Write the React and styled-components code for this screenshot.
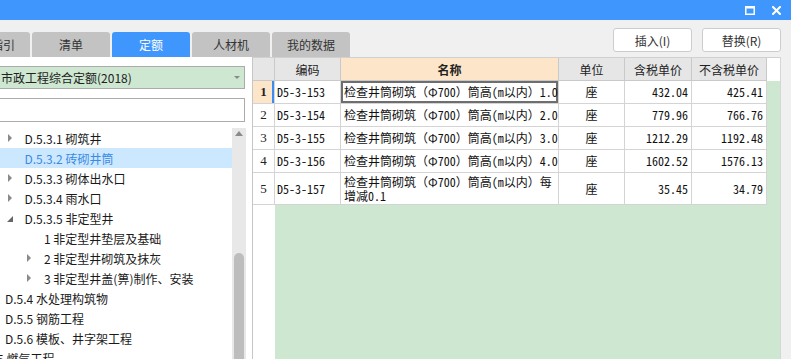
import React from 'react';
import styled, { createGlobalStyle } from 'styled-components';

const GlobalStyle = createGlobalStyle`
  html, body { margin: 0; padding: 0; }
  body {
    background: #f0f0f0;
    font-family: "Noto Sans CJK SC", "Noto Sans", sans-serif;
    overflow: hidden;
  }
  * { box-sizing: border-box; }
`;

const MONO = `"Noto Sans Mono CJK SC", "Noto Sans CJK SC", "Liberation Mono", monospace`;

const Window = styled.div`
  width: 791px;
  height: 359px;
  display: flex;
  flex-direction: column;
  background: #f0f0f0;
  overflow: hidden;
`;

const TitleBar = styled.div`
  height: 20px;
  flex-shrink: 0;
  background: #3f97fd;
  display: flex;
  justify-content: flex-end;
  align-items: center;
  gap: 17px;
  padding-right: 10px;
`;

const Toolbar = styled.div`
  height: 37px;
  flex-shrink: 0;
  display: flex;
`;

const Tabs = styled.div`
  display: flex;
  gap: 2px;
  align-self: flex-end;
  margin-left: -48px;
`;

const Tab = styled.div`
  width: 78px;
  height: 25px;
  flex-shrink: 0;
  border-radius: 3px 3px 0 0;
  background: ${p => (p.$active ? '#3f97fd' : '#c3c3c3')};
  color: ${p => (p.$active ? '#ffffff' : '#333333')};
  font-size: 12px;
  display: flex;
  align-items: center;
  justify-content: center;
`;

const Actions = styled.div`
  margin-left: auto;
  margin-top: 8px;
  margin-right: 10px;
  display: flex;
  gap: 10px;
`;

const ActionButton = styled.button`
  width: 79px;
  height: 24px;
  padding: 0;
  background: #ffffff;
  border: 1px solid #cdcdcd;
  border-radius: 3px;
  font-family: "Noto Sans CJK SC", sans-serif;
  font-size: 12px;
  color: #333333;
`;

const Main = styled.div`
  flex: 1;
  min-height: 0;
  display: flex;
`;

const LeftPanel = styled.div`
  width: 252px;
  flex-shrink: 0;
  background: #ffffff;
  display: flex;
  flex-direction: column;
  padding-top: 9px;
  overflow: hidden;
`;

const Select = styled.div`
  width: 245px;
  height: 23px;
  flex-shrink: 0;
  background: #cde7d1;
  border: 1px solid #ababab;
  border-left: none;
  display: flex;
  align-items: center;
  padding-left: 1px;
  font-size: 12px;
  color: #222222;
`;

const SelectArrow = styled.span`
  margin-left: auto;
  margin-right: 4px;
  width: 0;
  height: 0;
  border-left: 3px solid transparent;
  border-right: 3px solid transparent;
  border-top: 3px solid #8a8a8a;
`;

const Search = styled.div`
  width: 245px;
  height: 24px;
  flex-shrink: 0;
  margin-top: 9px;
  background: #ffffff;
  border: 1px solid #ababab;
  border-left: none;
`;

const TreeWrap = styled.div`
  flex: 1;
  min-height: 0;
  margin-top: 6px;
  display: flex;
`;

const TreeList = styled.div`
  width: 232px;
  flex-shrink: 0;
  overflow: hidden;
`;

const TreeRow = styled.div`
  height: 20px;
  display: flex;
  align-items: center;
  background: ${p => (p.$selected ? '#cce8ff' : 'transparent')};
  color: ${p => (p.$selected ? '#3a8ae6' : '#1a1a1a')};
  font-size: 12px;
  white-space: nowrap;
`;

const TreeInner = styled.div`
  display: flex;
  align-items: center;
  margin-left: ${p => 5 + p.$level * 19.5 - 18}px;
`;

const CaretBox = styled.span`
  width: 18px;
  flex-shrink: 0;
  display: flex;
  align-items: center;
`;

const CaretClosed = styled.span`
  width: 0;
  height: 0;
  margin-left: 1px;
  border-top: 4px solid transparent;
  border-bottom: 4px solid transparent;
  border-left: 4px solid #8a8a8a;
`;

const CaretOpen = styled.span`
  width: 0;
  height: 0;
  margin-top: 2px;
  border-left: 6px solid transparent;
  border-bottom: 6px solid #666666;
`;

const ScrollTrack = styled.div`
  width: 14px;
  flex-shrink: 0;
  background: #e8e8e8;
  display: flex;
  flex-direction: column;
  align-items: center;
`;

const ScrollUp = styled.span`
  margin-top: 3px;
  width: 0;
  height: 0;
  border-left: 4px solid transparent;
  border-right: 4px solid transparent;
  border-bottom: 5px solid #8a8a8a;
`;

const ScrollThumb = styled.div`
  margin-top: 117px;
  width: 10px;
  flex: 1;
  background: #bdbdbd;
  border-radius: 5px 5px 0 0;
`;

const TableArea = styled.div`
  flex: 1;
  min-width: 0;
  display: flex;
  border-top: 1px solid #d0d0d0;
  border-left: 1px solid #c6c6c6;
  border-right: 1px solid #d6d6d6;
`;

const Gutter = styled.div`
  width: 10px;
  flex-shrink: 0;
  background: #f0f0f0;
`;

const Grid = styled.div`
  flex: 1;
  display: grid;
  grid-template-columns: 22px 66px 218px 66px 67px 75px 1fr;
  grid-template-rows: 23px repeat(4, 23px) 32px 1fr;
  background: #cde7d1;
`;

const HeadCell = styled.div`
  background: ${p => (p.$accent ? '#fde5c9' : '#e6e6e6')};
  border-right: 1px solid #c9c9c9;
  border-bottom: 1px solid #c9c9c9;
  font-size: 12px;
  font-weight: ${p => (p.$accent ? 700 : 400)};
  color: #222222;
  display: flex;
  align-items: center;
  justify-content: center;
`;

const HeadFiller = styled.div`
  background: #ffffff;
`;

const RowNum = styled.div`
  background: ${p => (p.$active ? '#fde5c9' : '#ffffff')};
  border-right: 1px solid #d4d4d4;
  border-bottom: 1px solid #d4d4d4;
  box-shadow: ${p => (p.$active ? 'inset -2px 0 0 #3b8df2' : 'none')};
  font-family: "Liberation Serif", serif;
  font-size: 13px;
  font-weight: ${p => (p.$active ? 700 : 400)};
  color: #222222;
  display: flex;
  align-items: center;
  justify-content: center;
`;

const Cell = styled.div`
  background: #ffffff;
  border-right: 1px solid #d4d4d4;
  border-bottom: 1px solid #d4d4d4;
  box-shadow: ${p => (p.$selected ? 'inset 0 0 0 2px #6e6e6e' : 'none')};
  font-family: ${MONO};
  font-size: 12px;
  line-height: 14px;
  color: #111111;
  display: flex;
  align-items: ${p => (p.$top ? 'flex-start' : 'center')};
  padding: ${p => (p.$top ? '2px 3px 0' : '0 3px')};
  justify-content: ${p =>
    p.$align === 'right' ? 'flex-end' : p.$align === 'center' ? 'center' : 'flex-start'};
  white-space: pre;
  overflow: hidden;
`;

const CodeCell = styled(Cell)`
  padding-left: 2px;
`;

const RowFiller = styled.div``;

const NumRest = styled.div`
  background: #ffffff;
`;

const MaxIcon = () => (
  <svg width="10" height="9" viewBox="0 0 10 9">
    <rect x="0.75" y="1" width="8.5" height="7.25" fill="none" stroke="#fff" strokeWidth="1.5" />
    <rect x="0" y="0" width="10" height="2.5" fill="#fff" />
  </svg>
);

const CloseIcon = () => (
  <svg width="9" height="9" viewBox="0 0 9 9">
    <path d="M1 1L8 8M8 1L1 8" stroke="#fff" strokeWidth="2" strokeLinecap="square" />
  </svg>
);

const tabs = ['清单指引', '清单', '定额', '人材机', '我的数据'];

const tree = [
  { level: 1, label: 'D.5.3.1 砌筑井', caret: 'closed' },
  { level: 1, label: 'D.5.3.2 砖砌井筒', selected: true },
  { level: 1, label: 'D.5.3.3 砌体出水口', caret: 'closed' },
  { level: 1, label: 'D.5.3.4 雨水口', caret: 'closed' },
  { level: 1, label: 'D.5.3.5 非定型井', caret: 'open' },
  { level: 2, label: '1 非定型井垫层及基础' },
  { level: 2, label: '2 非定型井砌筑及抹灰', caret: 'closed' },
  { level: 2, label: '3 非定型井盖(箅)制作、安装', caret: 'closed' },
  { level: 0, label: 'D.5.4 水处理构筑物' },
  { level: 0, label: 'D.5.5 钢筋工程' },
  { level: 0, label: 'D.5.6 模板、井字架工程' },
  { level: -1, label: 'D.5 燃气工程' },
];

const rows = [
  { n: 1, code: 'D5-3-153', name: '检查井筒砌筑（Φ700）筒高(m以内）1.0', tax: '432.04', notax: '425.41' },
  { n: 2, code: 'D5-3-154', name: '检查井筒砌筑（Φ700）筒高(m以内）2.0', tax: '779.96', notax: '766.76' },
  { n: 3, code: 'D5-3-155', name: '检查井筒砌筑（Φ700）筒高(m以内）3.0', tax: '1212.29', notax: '1192.48' },
  { n: 4, code: 'D5-3-156', name: '检查井筒砌筑（Φ700）筒高(m以内）4.0', tax: '1602.52', notax: '1576.13' },
  { n: 5, code: 'D5-3-157', name: '检查井筒砌筑（Φ700）筒高(m以内）每\n增减0.1', tax: '35.45', notax: '34.79', tall: true },
];

export default function App() {
  return (
    <>
      <GlobalStyle />
      <Window>
        <TitleBar>
          <MaxIcon />
          <CloseIcon />
        </TitleBar>
        <Toolbar>
          <Tabs>
            {tabs.map(t => (
              <Tab key={t} $active={t === '定额'}>{t}</Tab>
            ))}
          </Tabs>
          <Actions>
            <ActionButton>插入(I)</ActionButton>
            <ActionButton>替换(R)</ActionButton>
          </Actions>
        </Toolbar>
        <Main>
          <LeftPanel>
            <Select>
              市政工程综合定额(2018)
              <SelectArrow />
            </Select>
            <Search />
            <TreeWrap>
              <TreeList>
                {tree.map(item => (
                  <TreeRow key={item.label} $selected={item.selected}>
                    <TreeInner $level={item.level}>
                      <CaretBox>
                        {item.caret === 'closed' && <CaretClosed />}
                        {item.caret === 'open' && <CaretOpen />}
                      </CaretBox>
                      {item.label}
                    </TreeInner>
                  </TreeRow>
                ))}
              </TreeList>
              <ScrollTrack>
                <ScrollUp />
                <ScrollThumb />
              </ScrollTrack>
            </TreeWrap>
          </LeftPanel>
          <TableArea>
            <Grid>
              <HeadCell />
              <HeadCell>编码</HeadCell>
              <HeadCell $accent>名称</HeadCell>
              <HeadCell>单位</HeadCell>
              <HeadCell>含税单价</HeadCell>
              <HeadCell>不含税单价</HeadCell>
              <HeadFiller />
              {rows.map(r => (
                <React.Fragment key={r.n}>
                  <RowNum $active={r.n === 1}>{r.n}</RowNum>
                  <CodeCell>{r.code}</CodeCell>
                  <Cell $selected={r.n === 1} $top={r.tall}>{r.name}</Cell>
                  <Cell $align="center">座</Cell>
                  <Cell $align="right">{r.tax}</Cell>
                  <Cell $align="right">{r.notax}</Cell>
                  <RowFiller />
                </React.Fragment>
              ))}
              <NumRest />
            </Grid>
          </TableArea>
          <Gutter />
        </Main>
      </Window>
    </>
  );
}
